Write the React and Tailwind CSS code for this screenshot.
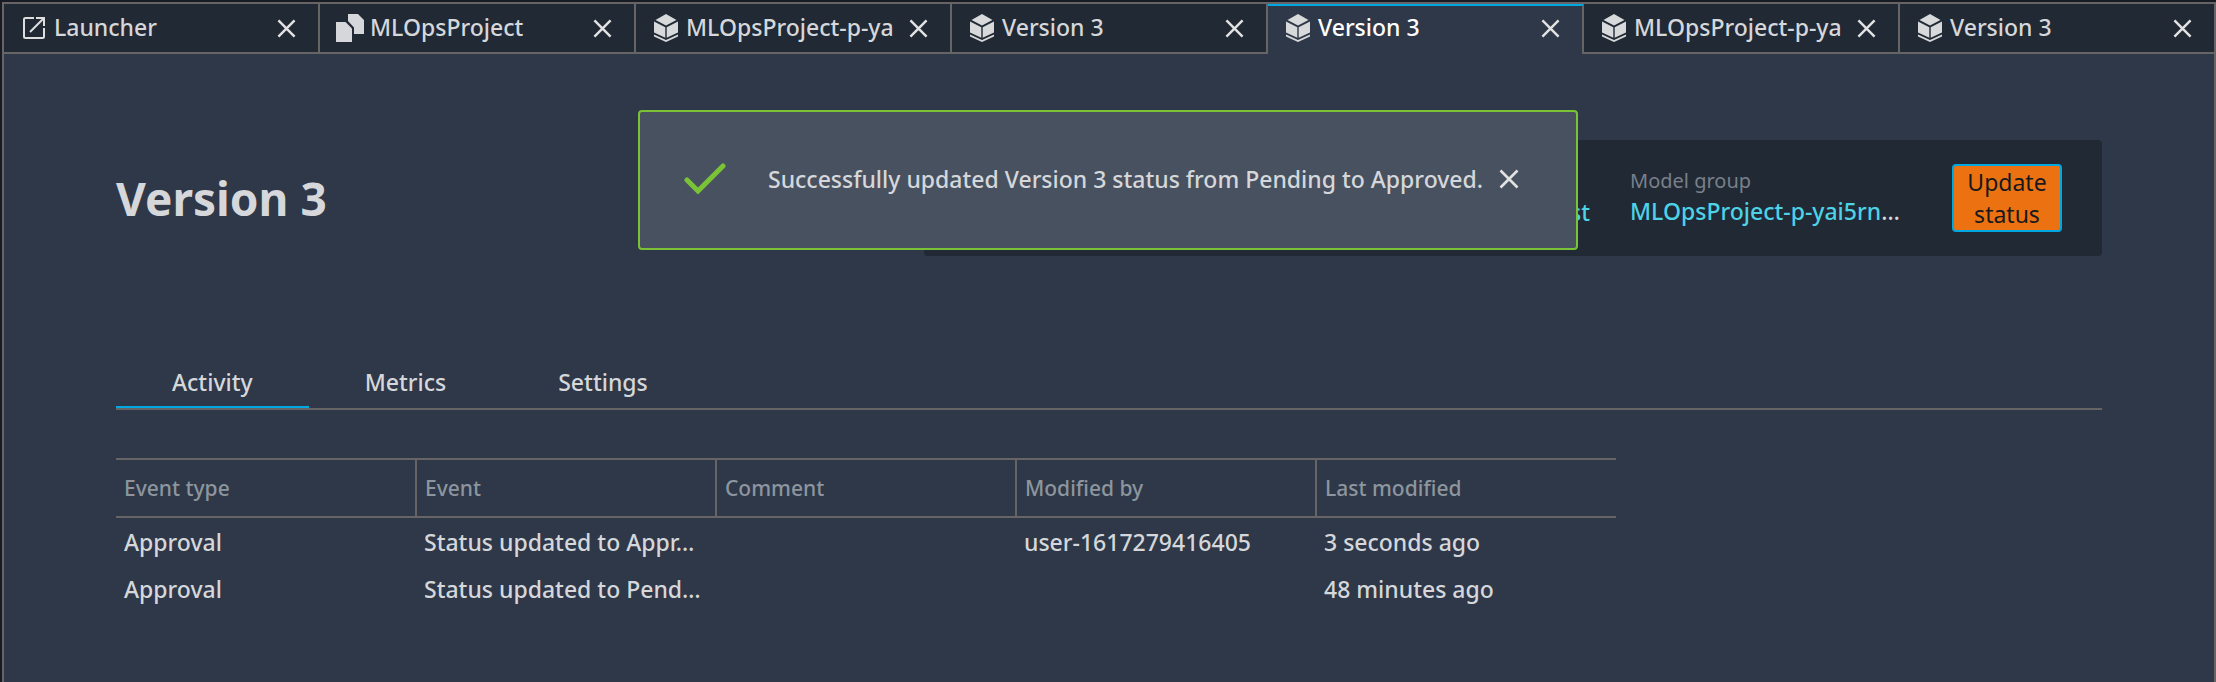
import React from "react";

const CloseIcon = ({ className }) => (
  <svg viewBox="0 0 20 20" className={className} fill="none" stroke="#e2e2e2" strokeWidth="2.6" aria-hidden="true">
    <path d="M1.500 1.500 18.500 18.500M18.500 1.500 1.500 18.500" />
  </svg>
);

const LaunchIcon = () => (
  <svg viewBox="0 0 22 22" className="h-[22px] w-[22px]" fill="none" stroke="#dedede" strokeWidth="2" aria-hidden="true">
    <path d="M11 1H2.500A1.500 1.500 0 0 0 1 2.500v17A1.500 1.500 0 0 0 2.500 21h17a1.500 1.500 0 0 0 1.500-1.500V11M13 1h8v8M20.500 1.500 7 15" />
  </svg>
);

const FilesIcon = () => (
  <svg viewBox="0 0 28 28" className="h-7 w-7" fill="#d5d7da" aria-hidden="true">
    <path d="M0 8h9.500L16 14.500V28H0z" />
    <path d="M12 0h10l6 6v14H18v-6.500L12 7z" />
  </svg>
);

const CubeIcon = () => (
  <svg viewBox="0 0 24 28" className="h-7 w-6" fill="#d8d9da" aria-hidden="true">
    <path d="M12 0 22.500 6 12 11.500 1.500 6z" />
    <path d="M0 7.500 11.300 13.200v10.500L0 18.500zM24 7.500 12.700 13.200v10.500L24 18.500z" />
    <path d="M0 20.500 12 26 24 20.500V22.500L12 28 0 22.500z" />
  </svg>
);

const tabs = [
  { title: "Launcher", Icon: LaunchIcon },
  { title: "MLOpsProject", Icon: FilesIcon },
  { title: "MLOpsProject-p-ya", Icon: CubeIcon },
  { title: "Version 3", Icon: CubeIcon },
  { title: "Version 3", Icon: CubeIcon, active: true },
  { title: "MLOpsProject-p-ya", Icon: CubeIcon },
  { title: "Version 3", Icon: CubeIcon },
];

const columns = ["Event type", "Event", "Comment", "Modified by", "Last modified"];
const rows = [
  ["Approval", "Status updated to Appr…", "", "user-1617279416405", "3 seconds ago"],
  ["Approval", "Status updated to Pend…", "", "", "48 minutes ago"],
];

function WindowTab({ title, Icon, active }) {
  return (
    <div
      className={
        active
          ? "flex min-w-0 flex-1 items-center border-r-2 border-t-2 border-r-[#666464] border-t-[#00a8e1] bg-[#2e3848] pb-1 pl-4 pr-[22px] text-white last:border-r-0"
          : "flex min-w-0 flex-1 items-center border-b-2 border-r-2 border-[#666464] bg-[#202934] pl-4 pr-[22px] text-[#d5d7da] last:border-r-0"
      }
    >
      <button type="button" className="flex min-w-0 flex-1 items-center gap-1.5">
        <span className="flex w-7 shrink-0 justify-center"><Icon /></span>
        <span className="whitespace-nowrap pb-0.5">{title}</span>
      </button>
      <button type="button" aria-label={`Close ${title}`} className="shrink-0">
        <CloseIcon className="h-[19px] w-[19px]" />
      </button>
    </div>
  );
}

export default function App() {
  return (
    <div className="min-h-screen bg-[#181b24] pl-0.5 pt-0.5 font-['Noto_Sans',sans-serif] text-[23px] font-medium leading-8 text-[#d5d7da]">
      <div className="relative flex min-h-[680px] flex-col border-l-2 border-r-2 border-t-2 border-[#666464] bg-[#2e3848]">
        <nav className="flex h-[50px] items-stretch">
          {tabs.map((tab, i) => (
            <WindowTab key={i} {...tab} />
          ))}
        </nav>

        <main className="px-28 pt-[86px]">
          <header className="flex items-center justify-between">
            <h1 className="text-[46px] font-bold leading-[64px]">Version 3</h1>
            <section className="flex h-[116px] w-[1178px] items-center justify-end rounded bg-[#202934] pr-10">
              <a href="#latest" className="mr-10 mt-7 text-[#4dd2e6]">latest</a>
              <div className="mr-10 w-[282px]">
                <div className="text-[20px] font-normal leading-7 text-[#79808a]">Model group</div>
                <div className="whitespace-nowrap pb-0.5">
                  <a href="#group" className="text-[#4dd2e6]">MLOpsProject-p-yai5rn</a>…
                </div>
              </div>
              <button type="button" className="w-[110px] rounded border-2 border-[#00a8e1] bg-[#ec7211] font-normal text-[#16191f]">
                Update status
              </button>
            </section>
          </header>

          <div role="tablist" className="mt-[104px] flex border-b-2 border-[#666464]">
            {["Activity", "Metrics", "Settings"].map((t, i) => (
              <button
                key={t}
                type="button"
                role="tab"
                aria-selected={i === 0}
                className={
                  i === 0
                    ? "border-b-2 border-[#00a8e1] px-14 pb-2 pt-1.5"
                    : "border-b-2 border-transparent px-14 pb-2 pt-1.5"
                }
              >
                {t}
              </button>
            ))}
          </div>

          <table className="mt-12 w-[1500px] table-fixed border-collapse text-left">
            <thead>
              <tr className="h-[58px] border-y-2 border-[#666464] text-[21px] text-[#8d959e]">
                {columns.map((c) => (
                  <th key={c} className="border-r-2 border-[#666464] px-2 font-medium last:border-r-0">{c}</th>
                ))}
              </tr>
            </thead>
            <tbody>
              {rows.map((r, i) => (
                <tr key={i} className="h-12">
                  {r.map((cell, j) => (
                    <td key={j} className="whitespace-nowrap px-2">{cell}</td>
                  ))}
                </tr>
              ))}
            </tbody>
          </table>
        </main>

        <div className="absolute inset-x-0 top-[106px] flex justify-center pr-0.5">
          <div
            role="status"
            className="flex h-[140px] w-[940px] items-center rounded border-2 border-[#7ac336] bg-[#485160] pb-0.5 pl-11"
          >
            <svg viewBox="0 0 42 32" className="h-8 w-[42px] shrink-0" fill="none" stroke="#7ac336" strokeWidth="5" strokeLinecap="round" aria-hidden="true">
              <path d="M3 17 14 28 39 3" />
            </svg>
            <p className="ml-[42px] whitespace-nowrap">Successfully updated Version 3 status from Pending to Approved.</p>
            <button type="button" aria-label="Dismiss" className="ml-4">
              <CloseIcon className="h-5 w-5" />
            </button>
          </div>
        </div>
      </div>
    </div>
  );
}
